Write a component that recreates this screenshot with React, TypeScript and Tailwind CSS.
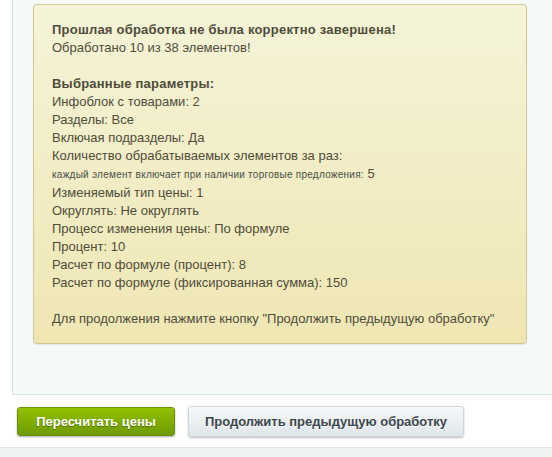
const params: [string, string][] = [
  ["Инфоблок с товарами", "2"],
  ["Разделы", "Все"],
  ["Включая подразделы", "Да"],
];

const params2: [string, string][] = [
  ["Изменяемый тип цены", "1"],
  ["Округлять", "Не округлять"],
  ["Процесс изменения цены", "По формуле"],
  ["Процент", "10"],
  ["Расчет по формуле (процент)", "8"],
  ["Расчет по формуле (фиксированная сумма)", "150"],
];

export default function App() {
  return (
    <div className="h-[457px] w-full overflow-hidden bg-white font-['Liberation_Sans',Arial,sans-serif] text-[13px] leading-[18px]">
      <div className="ml-3 h-[395px] border-b border-l border-[#dae4e8] bg-[#f5f9fa] pt-1">
        <div className="ml-[20px] w-[494px] rounded-[4px] border border-[#d6c790] bg-gradient-to-b from-[#f5f4d9] to-[#efe6b3] pb-[15px] pl-[18px] pt-[16px] text-[#4f4c3a] shadow-[0_1px_1px_rgba(0,0,0,0.08)]">
          <div className="font-bold tracking-[0.22px]">Прошлая обработка не была корректно завершена!</div>
          <div>Обработано 10 из 38 элементов!</div>
          <div className="h-[18px]" />
          <div className="font-bold tracking-[0.22px]">Выбранные параметры:</div>
          {params.map(([k, v]) => (
            <div key={k}>
              {k}: {v}
            </div>
          ))}
          <div>Количество обрабатываемых элементов за раз:</div>
          <div>
            <span className="text-[10px] tracking-[0.25px] text-[#4a4f4c]">
              каждый элемент включает при наличии торговые предложения:
            </span>{" "}
            5
          </div>
          {params2.map(([k, v]) => (
            <div key={k}>
              {k}: {v}
            </div>
          ))}
          <div className="h-[18px]" />
          <div>Для продолжения нажмите кнопку "Продолжить предыдущую обработку"</div>
        </div>
      </div>

      <div className="flex h-[52px] items-center gap-[13px] pl-[17px] pt-[1px]">
        <button className="h-[29px] w-[158px] rounded-[3px] border border-[#6a9200] bg-gradient-to-b from-[#93c100] to-[#6e9a00] text-[13px] font-bold text-white shadow-[0_1px_2px_rgba(0,0,0,0.35)] [text-shadow:0_1px_1px_rgba(0,0,0,0.35)]">
          Пересчитать цены
        </button>
        <button className="h-[31px] w-[276px] rounded-[3px] border border-[#cdd6da] bg-gradient-to-b from-[#f7f9fa] to-[#dfe6e9] text-[13px] font-bold text-[#3c464c] shadow-[0_1px_2px_rgba(0,0,0,0.25)] [text-shadow:0_1px_0_rgba(255,255,255,0.8)]">
          Продолжить предыдущую обработку
        </button>
      </div>

      <div className="h-[10px] border-t border-[#dde6e8] bg-[#eef3f4]" />
    </div>
  );
}
